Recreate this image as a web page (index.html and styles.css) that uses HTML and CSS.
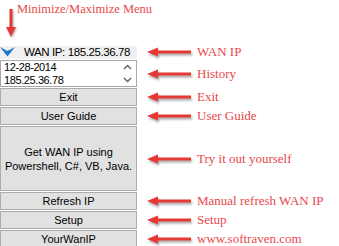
FILE: index.html
```html
<!DOCTYPE html>
<html lang="en">
<head>
    <meta charset="UTF-8">
    <title>YourWanIP</title>
    <link rel="stylesheet" href="styles.css">
</head>
<body>
    <div class="screen">
        <!-- top note -->
        <div class="top-note">
            <svg class="arrow-down" width="12" height="40" viewBox="0 0 12 40">
                <rect x="4.5" y="9" width="3" height="20" fill="#e53935"/>
                <polygon points="1,27 11,27 6,37" fill="#e53935"/>
            </svg>
            <span class="note">Minimize/Maximize Menu</span>
        </div>

        <div class="row">
            <div class="widget titlebar">
                <svg class="chevron" width="15" height="10" viewBox="0 0 15 10">
                    <polygon points="0,0 7.5,4 15,0 7.5,9.5" fill="#1a78c9"/>
                </svg>
                <span>WAN IP: 185.25.36.78</span>
            </div>
            <div class="callout">
                <svg class="arrow" width="44" height="10" viewBox="0 0 44 10"><polygon points="0,5 11,0.5 11,9.5" /><rect x="10" y="3.5" width="34" height="3"/></svg>
                <span class="note">WAN IP</span>
            </div>
        </div>

        <div class="row">
            <div class="widget history">
                <div class="history-items">
                    <div>12-28-2014</div>
                    <div>185.25.36.78</div>
                </div>
                <div class="scroll">
                    <svg width="9" height="6" viewBox="0 0 9 6"><polyline points="1,5 4.5,1.5 8,5" /></svg>
                    <svg width="9" height="6" viewBox="0 0 9 6"><polyline points="1,1 4.5,4.5 8,1" /></svg>
                </div>
            </div>
            <div class="callout">
                <svg class="arrow" width="44" height="10" viewBox="0 0 44 10"><polygon points="0,5 11,0.5 11,9.5" /><rect x="10" y="3.5" width="34" height="3"/></svg>
                <span class="note">History</span>
            </div>
        </div>

        <div class="row gap">
            <button class="widget btn">Exit</button>
            <div class="callout">
                <svg class="arrow" width="44" height="10" viewBox="0 0 44 10"><polygon points="0,5 11,0.5 11,9.5" /><rect x="10" y="3.5" width="34" height="3"/></svg>
                <span class="note">Exit</span>
            </div>
        </div>

        <div class="row gap">
            <button class="widget btn">User Guide</button>
            <div class="callout">
                <svg class="arrow" width="44" height="10" viewBox="0 0 44 10"><polygon points="0,5 11,0.5 11,9.5" /><rect x="10" y="3.5" width="34" height="3"/></svg>
                <span class="note">User Guide</span>
            </div>
        </div>

        <div class="row gap">
            <button class="widget btn btn-big">Get WAN IP using<br>Powershell, C#, VB, Java.</button>
            <div class="callout">
                <svg class="arrow" width="44" height="10" viewBox="0 0 44 10"><polygon points="0,5 11,0.5 11,9.5" /><rect x="10" y="3.5" width="34" height="3"/></svg>
                <span class="note">Try it out yourself</span>
            </div>
        </div>

        <div class="row gap">
            <button class="widget btn">Refresh IP</button>
            <div class="callout">
                <svg class="arrow" width="44" height="10" viewBox="0 0 44 10"><polygon points="0,5 11,0.5 11,9.5" /><rect x="10" y="3.5" width="34" height="3"/></svg>
                <span class="note">Manual refresh WAN IP</span>
            </div>
        </div>

        <div class="row gap">
            <button class="widget btn">Setup</button>
            <div class="callout">
                <svg class="arrow" width="44" height="10" viewBox="0 0 44 10"><polygon points="0,5 11,0.5 11,9.5" /><rect x="10" y="3.5" width="34" height="3"/></svg>
                <span class="note">Setup</span>
            </div>
        </div>

        <div class="row gap">
            <button class="widget btn">YourWanIP</button>
            <div class="callout">
                <svg class="arrow" width="44" height="10" viewBox="0 0 44 10"><polygon points="0,5 11,0.5 11,9.5" /><rect x="10" y="3.5" width="34" height="3"/></svg>
                <span class="note">www.softraven.com</span>
            </div>
        </div>
    </div>
</body>
</html>
```

FILE: styles.css
```css
* {
    margin: 0;
    padding: 0;
    box-sizing: border-box;
}

body {
    background-color: #fff;
    font-family: "Liberation Sans", Arial, sans-serif;
    font-size: 11px;
    color: #000;
}

.screen {
    width: 339px;
    height: 246px;
    overflow: hidden;
}

/* red annotations */
.note {
    font-family: "Liberation Serif", "Times New Roman", serif;
    font-size: 13px;
    color: #e8484a;
    white-space: nowrap;
}

.top-note {
    height: 44px;
    display: flex;
    align-items: flex-start;
}

.top-note .arrow-down {
    margin-left: 5px;
    filter: drop-shadow(1px 1px 1px rgba(0, 0, 0, 0.3));
}

.top-note .note {
    font-size: 12.5px;
    margin-top: 2px;
    line-height: 14px;
}

.row {
    display: flex;
    align-items: center;
}

.row.gap {
    margin-top: 1px;
}

.widget {
    width: 137px;
    flex-shrink: 0;
}

.callout {
    display: flex;
    align-items: center;
    margin-left: 10px;
    gap: 6px;
}

.callout .arrow {
    fill: #e53935;
    filter: drop-shadow(1px 2px 1px rgba(0, 0, 0, 0.35));
}

/* app widgets */
.titlebar {
    height: 13px;
    background-color: #f0f0f0;
    display: flex;
    align-items: center;
    gap: 9px;
    line-height: 13px;
}

.titlebar span {
    font-size: 11.5px;
    letter-spacing: -0.4px;
}

.history {
    height: 27px;
    border: 1px solid #a8a8a8;
    background-color: #fff;
    display: flex;
}

.history-items {
    flex-grow: 1;
    padding: 0 0 0 3px;
    line-height: 12.5px;
    letter-spacing: -0.4px;
}

.scroll {
    width: 17px;
    display: flex;
    flex-direction: column;
    justify-content: space-around;
    align-items: center;
    background-color: #fff;
}

.scroll polyline {
    fill: none;
    stroke: #606060;
    stroke-width: 1.4;
}

.btn {
    height: 18px;
    border: 1px solid #adadad;
    background-color: #e1e1e1;
    font-family: "Liberation Sans", Arial, sans-serif;
    font-size: 11px;
    color: #000;
    text-align: center;
    line-height: 14px;
}

.btn-big {
    height: 65px;
}
```
